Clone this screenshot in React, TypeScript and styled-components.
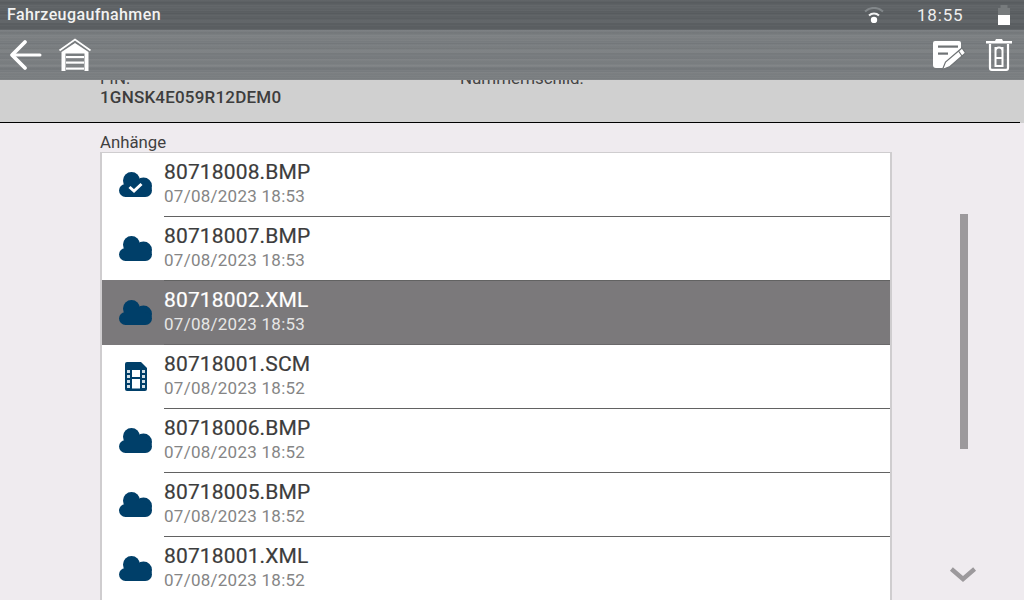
import React from "react";
import styled, { createGlobalStyle, css } from "styled-components";

const Global = createGlobalStyle`
  html, body { margin: 0; padding: 0; width: 1024px; height: 600px; overflow: hidden; }
  body { font-family: Roboto, "Liberation Sans", sans-serif; background: #efebef; }
`;

const brushed = css`
  background-image:
    repeating-linear-gradient(180deg, rgba(255,255,255,.025) 0 1px, rgba(0,0,0,0) 1px 3px, rgba(0,0,0,.03) 3px 4px, rgba(0,0,0,0) 4px 5px),
    repeating-linear-gradient(180deg, rgba(255,255,255,.02) 0 2px, rgba(0,0,0,.025) 2px 5px, rgba(255,255,255,0) 5px 7px),
    repeating-linear-gradient(180deg, rgba(0,0,0,.025) 0 3px, rgba(255,255,255,.02) 3px 11px, rgba(0,0,0,0) 11px 13px);
`;

const Page = styled.div`
  width: 1024px;
  height: 600px;
  display: flex;
  flex-direction: column;
  overflow: hidden;
`;
const StatusBar = styled.header`
  ${brushed}
  background-color: #5c6063;
  height: 30px;
  flex: none;
  display: flex;
  align-items: center;
  padding: 0 0 0 7px;
  color: #f2f2f2;
`;
const Title = styled.div`
  flex: 1;
  font-size: 16px;
  font-weight: 500;
  letter-spacing: 0.4px;
  line-height: 30px;
`;
const WifiSlot = styled.svg`
  width: 20px;
  height: 16px;
  margin-right: 33px;
`;
const Clock = styled.div`
  font-size: 17px;
  letter-spacing: 0.8px;
  width: 60px;
  color: #eeeeee;
`;
const BatterySlot = styled.svg`
  width: 12px;
  height: 20px;
  margin: 0 14px 0 21px;
`;
const Toolbar = styled.nav`
  ${brushed}
  background-color: #7a7e81;
  height: 50px;
  flex: none;
  display: flex;
  align-items: center;
  padding: 0 12px 0 8px;
  position: relative;
  z-index: 2;
`;
const ToolIcon = styled.svg`
  display: block;
  flex: none;
`;
const HomeIcon = styled(ToolIcon)`
  margin-left: 16px;
`;
const Spacer = styled.div`
  flex: 1;
`;
const EditIcon = styled(ToolIcon)`
  margin-right: 20px;
`;
const InfoPanel = styled.section`
  background: #d0d0d0;
  height: 43px;
  flex: none;
  box-sizing: border-box;
  position: relative;
  overflow: hidden;
  padding-left: 100px;
  display: grid;
  grid-template-columns: 360px 1fr;
  align-content: start;
  color: #3d3d3d;
  &::after {
    content: "";
    position: absolute;
    left: 0;
    right: 4px;
    bottom: 0;
    height: 1px;
    background: #000;
  }
`;
const InfoField = styled.div`
  margin-top: -11px;
`;
const InfoLabel = styled.div`
  font-size: 16.9px;
  line-height: 18px;
  color: #444;
`;
const InfoValue = styled.div`
  font-size: 17px;
  font-weight: 500;
  line-height: 18px;
  letter-spacing: 0.2px;
  margin-top: 1px;
`;
const Main = styled.main`
  flex: 1;
  min-height: 0;
  display: flex;
  background: #efebef;
`;
const Content = styled.div`
  width: 792px;
  margin-left: 100px;
  flex: none;
  display: flex;
  flex-direction: column;
`;
const SectionLabel = styled.div`
  font-size: 16.8px;
  line-height: 20px;
  height: 20px;
  padding-top: 9px;
  color: #3f3f3f;
`;
const List = styled.ul`
  list-style: none;
  margin: 0;
  padding: 0;
  flex: 1;
  background: #fff;
  border: 2px solid #cfcdcf;
  border-top-width: 1px;
  border-bottom: 0;
  overflow: hidden;
`;
const Row = styled.li<{ $selected?: boolean }>`
  height: 64px;
  display: flex;
  background: ${(p) => (p.$selected ? "#7b797b" : "#fff")};
  margin-top: ${(p) => (p.$selected ? "-1px" : "0")};
  padding-top: ${(p) => (p.$selected ? "1px" : "0")};
`;
const IconCell = styled.div`
  width: 62px;
  flex: none;
  display: flex;
  align-items: center;
  justify-content: center;
  padding: 0 0 1px 5px;
  box-sizing: border-box;
`;
const RowBody = styled.div<{ $selected?: boolean }>`
  flex: 1;
  border-bottom: 1px solid ${(p) => (p.$selected ? "#6a686a" : "#626262")};
  box-sizing: border-box;
  height: 64px;
  padding-top: 5px;
`;
const FileName = styled.div<{ $selected?: boolean }>`
  font-size: 21px;
  line-height: 28px;
  letter-spacing: 0.15px;
  -webkit-text-stroke: 0.2px currentColor;
  color: ${(p) => (p.$selected ? "#fff" : "#3c3c3c")};
`;
const FileDate = styled.div<{ $selected?: boolean }>`
  font-size: 17px;
  line-height: 20px;
  letter-spacing: 0.26px;
  color: ${(p) => (p.$selected ? "#e6e6e6" : "#858585")};
`;
const Rail = styled.aside`
  flex: 1;
  position: relative;
`;
const Thumb = styled.div`
  position: absolute;
  left: 68px;
  top: 91px;
  width: 8px;
  height: 235px;
  background: #9c999c;
`;
const Chevron = styled.svg`
  position: absolute;
  left: 57px;
  top: 442px;
`;

const Cloud = ({ check }: { check?: boolean }) => (
  <svg width="33" height="25" viewBox="0 0 33 25" aria-hidden="true">
    <g fill="#003f69">
      <circle cx="12.500" cy="8.500" r="8.500" />
      <circle cx="24.500" cy="14" r="8.500" />
      <circle cx="26.500" cy="18.500" r="6.500" />
      <circle cx="6.500" cy="18.500" r="6.500" />
      <rect x="6" y="10" width="20" height="15" />
    </g>
    {check && (
      <path d="M10.500 15 15 19 22.500 12" fill="none" stroke="#fff" strokeWidth="3" />
    )}
  </svg>
);

const FilmFile = () => (
  <svg width="24" height="30" viewBox="0 0 24 30" aria-hidden="true">
    <path fill="#003f69" d="M3 0H17L23 6V27A2 2 0 0 1 21 29H3A2 2 0 0 1 1 27V2A2 2 0 0 1 3 0Z" />
    <g fill="#fff">
      <rect x="8" y="8" width="8" height="7" />
      <rect x="8" y="17" width="8" height="9.500" />
    </g>
    <g fill="#d3e0e8">
      <rect x="3" y="8" width="3" height="3" />
      <rect x="3" y="13" width="3" height="3" />
      <rect x="3" y="18" width="3" height="3" />
      <rect x="3" y="23" width="3" height="3" />
      <rect x="18" y="8" width="3" height="3" />
      <rect x="18" y="13" width="3" height="3" />
      <rect x="18" y="18" width="3" height="3" />
      <rect x="18" y="23" width="3" height="3" />
    </g>
  </svg>
);

type Item = { name: string; date: string; icon: "check" | "cloud" | "film"; selected?: boolean };
const items: Item[] = [
  { name: "80718008.BMP", date: "07/08/2023 18:53", icon: "check" },
  { name: "80718007.BMP", date: "07/08/2023 18:53", icon: "cloud" },
  { name: "80718002.XML", date: "07/08/2023 18:53", icon: "cloud", selected: true },
  { name: "80718001.SCM", date: "07/08/2023 18:52", icon: "film" },
  { name: "80718006.BMP", date: "07/08/2023 18:52", icon: "cloud" },
  { name: "80718005.BMP", date: "07/08/2023 18:52", icon: "cloud" },
  { name: "80718001.XML", date: "07/08/2023 18:52", icon: "cloud" },
];

export default function App() {
  return (
    <Page>
      <Global />
      <StatusBar>
        <Title>Fahrzeugaufnahmen</Title>
        <WifiSlot viewBox="0 0 20 16" aria-hidden="true">
          <path d="M1 4.500A13 13 0 0 1 19 4.500" fill="none" stroke="#82878a" strokeWidth="2" />
          <path d="M5 8.500A7.500 7.500 0 0 1 15 8.500" fill="none" stroke="#f2f2f2" strokeWidth="2" />
          <circle cx="10" cy="13" r="3.200" fill="#fff" />
        </WifiSlot>
        <Clock>18:55</Clock>
        <BatterySlot viewBox="0 0 12 20" aria-hidden="true">
          <rect x="2.500" y="0" width="7" height="3" fill="#777b7d" />
          <rect x="0" y="3" width="12" height="7" fill="#777b7d" />
          <rect x="0" y="10" width="12" height="10" fill="#fff" />
        </BatterySlot>
      </StatusBar>
      <Toolbar>
        <ToolIcon width="34" height="32" viewBox="0 0 34 32" aria-hidden="true">
          <path d="M32 16H6" fill="none" stroke="#fff" strokeWidth="3" strokeLinecap="round" />
          <path d="M17 3 4 16 17 29" fill="none" stroke="#fff" strokeWidth="3.800" strokeLinecap="round" strokeLinejoin="round" />
        </ToolIcon>
        <HomeIcon width="34" height="34" viewBox="0 0 34 34" aria-hidden="true">
          <path d="M1.500 12.500 17 1.500 32.500 12.500" fill="none" stroke="#fff" strokeWidth="1.800" />
          <path fill="#fff" d="M3.500 14 17 5 30.500 14V33H26.500V15.500H7.500V33H3.500Z" />
          <g fill="#fff">
            <rect x="8" y="18" width="18" height="2.200" />
            <rect x="8" y="23.500" width="18" height="2.200" />
            <rect x="8" y="29.500" width="18" height="2.200" />
          </g>
        </HomeIcon>
        <Spacer />
        <EditIcon width="34" height="32" viewBox="0 0 34 32" aria-hidden="true">
          <path fill="#fff" d="M3 2H27A2 2 0 0 1 29 4V10L14 24 12 29H4A3 3 0 0 1 1 26V4A2 2 0 0 1 3 2Z" />
          <rect x="6" y="6.500" width="20" height="2.200" fill="#6f7375" />
          <rect x="6" y="13.500" width="10" height="2.200" fill="#6f7375" />
          <path fill="#fff" stroke="#6f7375" strokeWidth="1.200" d="M10.500 30.500 13.500 23 30 9 33.500 14 18 27.500Z" />
          <path stroke="#6f7375" strokeWidth="1.200" d="M26.500 12 30 17" />
        </EditIcon>
        <ToolIcon width="26" height="32" viewBox="0 0 26 32" aria-hidden="true">
          <path fill="#fff" d="M10 0H16L17 2H26V4.500H0V2H9Z" />
          <path fill="none" stroke="#fff" strokeWidth="2.200" d="M4 5V29A1.800 1.800 0 0 0 5.800 30.800H20.200A1.800 1.800 0 0 0 22 29V5" />
          <path fill="none" stroke="#fff" strokeWidth="2" d="M9.500 8V27H16.500V8M9.500 19H16.500M9.500 12A3.500 3.500 0 0 1 16.500 12" />
        </ToolIcon>
      </Toolbar>
      <InfoPanel>
        <InfoField>
          <InfoLabel>FIN:</InfoLabel>
          <InfoValue>1GNSK4E059R12DEM0</InfoValue>
        </InfoField>
        <InfoField>
          <InfoLabel>Nummernschild:</InfoLabel>
        </InfoField>
      </InfoPanel>
      <Main>
        <Content>
          <SectionLabel>Anhänge</SectionLabel>
          <List>
            {items.map((it) => (
              <Row key={it.name} $selected={it.selected}>
                <IconCell>
                  {it.icon === "film" ? <FilmFile /> : <Cloud check={it.icon === "check"} />}
                </IconCell>
                <RowBody $selected={it.selected}>
                  <FileName $selected={it.selected}>{it.name}</FileName>
                  <FileDate $selected={it.selected}>{it.date}</FileDate>
                </RowBody>
              </Row>
            ))}
          </List>
        </Content>
        <Rail>
          <Thumb />
          <Chevron width="28" height="18" viewBox="0 0 28 18" aria-hidden="true">
            <path d="M2.400 4 14 14 25.600 4" fill="none" stroke="#9c999c" strokeWidth="4.400" />
          </Chevron>
        </Rail>
      </Main>
    </Page>
  );
}
